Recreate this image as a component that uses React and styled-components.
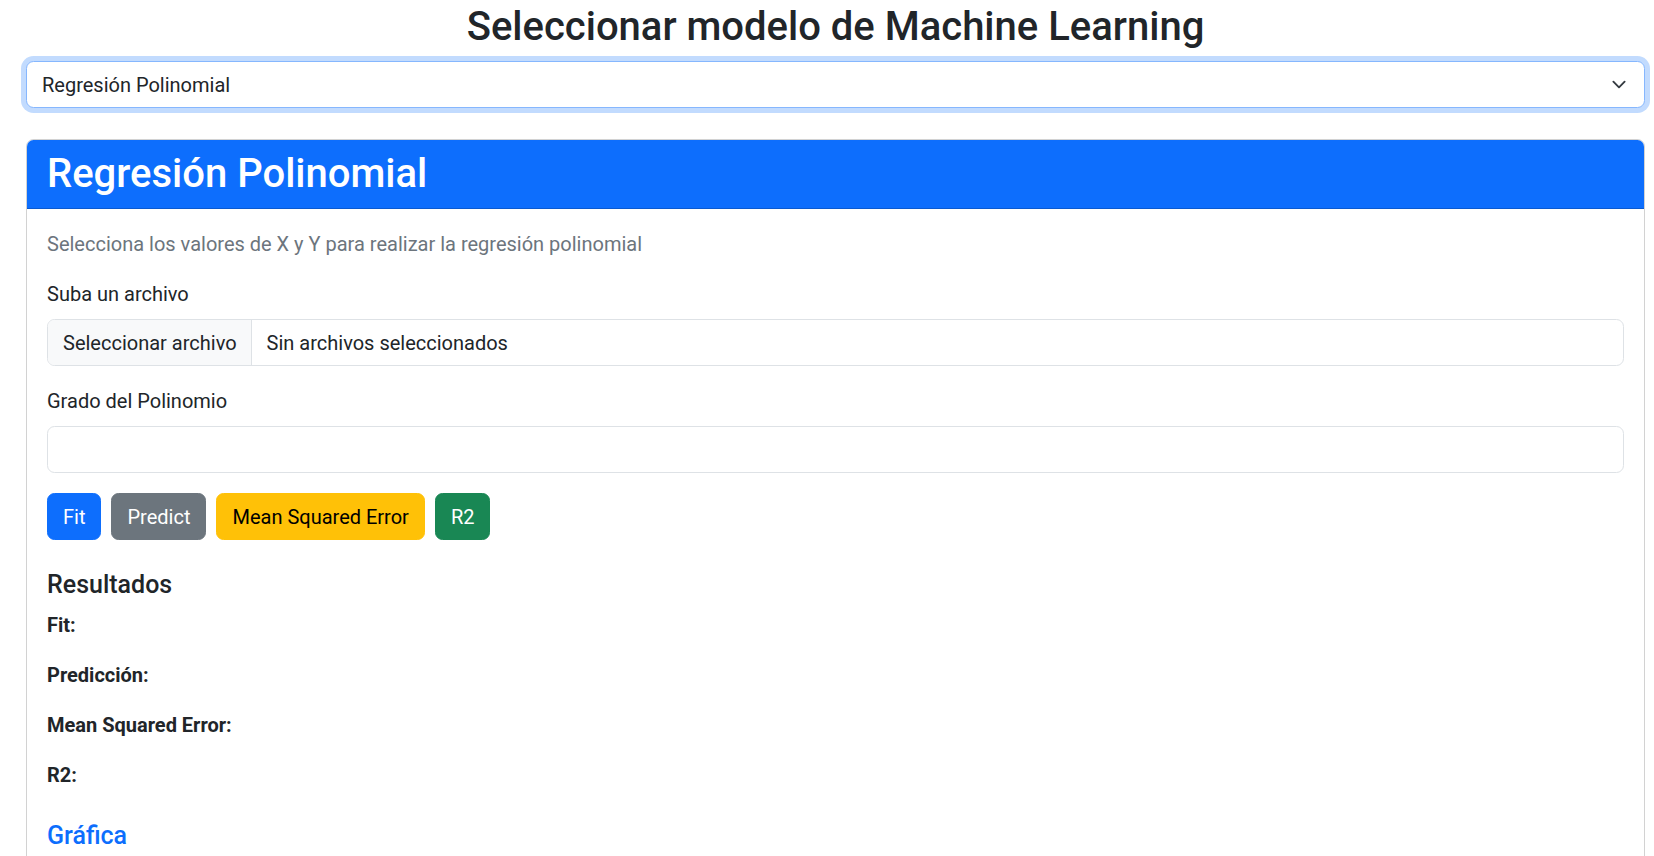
import React from "react";
import styled, { createGlobalStyle } from "styled-components";

const GlobalStyle = createGlobalStyle`
  * {
    box-sizing: border-box;
  }

  body {
    margin: 0;
    font-family: Roboto, "Liberation Sans", Arial, sans-serif;
    font-size: 20px;
    line-height: 1.5;
    color: #212529;
    background: #fff;
  }
`;

const Container = styled.div`
  padding: 3px 9px 0 26px;
`;

const Title = styled.h2`
  margin: 0 0 10px;
  font-size: 40px;
  font-weight: 500;
  line-height: 1.2;
  text-align: center;
`;

const SelectWrap = styled.div`
  position: relative;
`;

const Select = styled.select`
  display: block;
  width: 100%;
  height: 47px;
  padding: 7.5px 45px 7.5px 15px;
  font-family: inherit;
  font-size: 20px;
  line-height: 30px;
  color: #212529;
  background: #fff;
  border: 1px solid #86b7fe;
  border-radius: 7.5px;
  box-shadow: 0 0 0 5px rgba(13, 110, 253, 0.25);
  appearance: none;
  outline: none;
`;

const Chevron = styled.svg`
  position: absolute;
  right: 16px;
  top: 16px;
  width: 20px;
  height: 15px;
  pointer-events: none;
`;

const Card = styled.div`
  margin-top: 31px;
  border: 1px solid rgba(0, 0, 0, 0.175);
  border-radius: 7.5px;
  min-height: 760px;
  overflow: hidden;
`;

const CardHeader = styled.div`
  background: #0d6efd;
  color: #fff;
  padding: 10px 20px;
  border-bottom: 1px solid rgba(0, 0, 0, 0.175);
`;

const HeaderTitle = styled.h2`
  margin: 0;
  font-size: 40px;
  font-weight: 500;
  line-height: 1.2;
`;

const CardBody = styled.div`
  padding: 20px;
`;

const Muted = styled.p`
  margin: 0 0 20px;
  color: #6c757d;
`;

const Label = styled.label`
  display: block;
  margin-bottom: 10px;
`;

const Field = styled.div`
  margin-bottom: 20px;
`;

const FileBox = styled.div`
  display: flex;
  height: 47px;
  border: 1px solid #dee2e6;
  border-radius: 7.5px;
  overflow: hidden;
`;

const FileButton = styled.span`
  display: flex;
  align-items: center;
  padding: 0 14px 0 15px;
  background: #f8f9fa;
  border-right: 1px solid #dee2e6;
`;

const FileText = styled.span`
  display: flex;
  align-items: center;
  padding: 0 15px;
`;

const Input = styled.input`
  display: block;
  width: 100%;
  height: 47px;
  padding: 7.5px 15px;
  font-family: inherit;
  font-size: 20px;
  border: 1px solid #dee2e6;
  border-radius: 7.5px;
  outline: none;
`;

const Buttons = styled.div`
  display: flex;
  gap: 10px;
  margin-bottom: 30px;
`;

const colors = {
  primary: { bg: "#0d6efd", fg: "#fff" },
  secondary: { bg: "#6c757d", fg: "#fff" },
  warning: { bg: "#ffc107", fg: "#000" },
  success: { bg: "#198754", fg: "#fff" }
};

const Button = styled.button`
  height: 47px;
  padding: 7.5px 15px;
  font-family: inherit;
  font-size: 20px;
  line-height: 30px;
  border: 1px solid ${p => colors[p.variant].bg};
  border-radius: 7.5px;
  background: ${p => colors[p.variant].bg};
  color: ${p => colors[p.variant].fg};
  cursor: pointer;
`;

const SectionTitle = styled.h5`
  margin: ${p => (p.accent ? "31px" : "0")} 0 10px;
  font-size: 25px;
  font-weight: 500;
  line-height: 1.2;
  color: ${p => (p.accent ? "#0d6efd" : "#212529")};
`;

const Result = styled.p`
  margin: 0 0 20px;
  font-weight: 700;
`;

const botones = [
  { texto: "Fit", variant: "primary" },
  { texto: "Predict", variant: "secondary" },
  { texto: "Mean Squared Error", variant: "warning" },
  { texto: "R2", variant: "success" }
];

const resultados = ["Fit:", "Predicción:", "Mean Squared Error:", "R2:"];

class App extends React.Component {
  state = {
    modelo: "polinomial",
    grado: ""
  };

  onChangeModelo = event => {
    this.setState({ modelo: event.target.value });
  };

  onChangeGrado = event => {
    this.setState({ grado: event.target.value });
  };

  render() {
    return (
      <Container>
        <GlobalStyle />
        <Title>Seleccionar modelo de Machine Learning</Title>
        <SelectWrap>
          <Select value={this.state.modelo} onChange={this.onChangeModelo}>
            <option value="lineal">Regresión Lineal</option>
            <option value="polinomial">Regresión Polinomial</option>
          </Select>
          <Chevron viewBox="0 0 16 16">
            <path
              d="m2 5 6 6 6-6"
              fill="none"
              stroke="#343a40"
              strokeWidth="2"
              strokeLinecap="round"
              strokeLinejoin="round"
            />
          </Chevron>
        </SelectWrap>

        <Card>
          <CardHeader>
            <HeaderTitle>Regresión Polinomial</HeaderTitle>
          </CardHeader>
          <CardBody>
            <Muted>Selecciona los valores de X y Y para realizar la regresión polinomial</Muted>
            <Field>
              <Label>Suba un archivo</Label>
              <FileBox>
                <FileButton>Seleccionar archivo</FileButton>
                <FileText>Sin archivos seleccionados</FileText>
              </FileBox>
            </Field>
            <Field>
              <Label>Grado del Polinomio</Label>
              <Input value={this.state.grado} onChange={this.onChangeGrado} />
            </Field>
            <Buttons>
              {botones.map(b => (
                <Button key={b.texto} variant={b.variant}>
                  {b.texto}
                </Button>
              ))}
            </Buttons>
            <SectionTitle>Resultados</SectionTitle>
            {resultados.map(r => (
              <Result key={r}>{r}</Result>
            ))}
            <SectionTitle accent>Gráfica</SectionTitle>
          </CardBody>
        </Card>
      </Container>
    );
  }
}

export default App;
